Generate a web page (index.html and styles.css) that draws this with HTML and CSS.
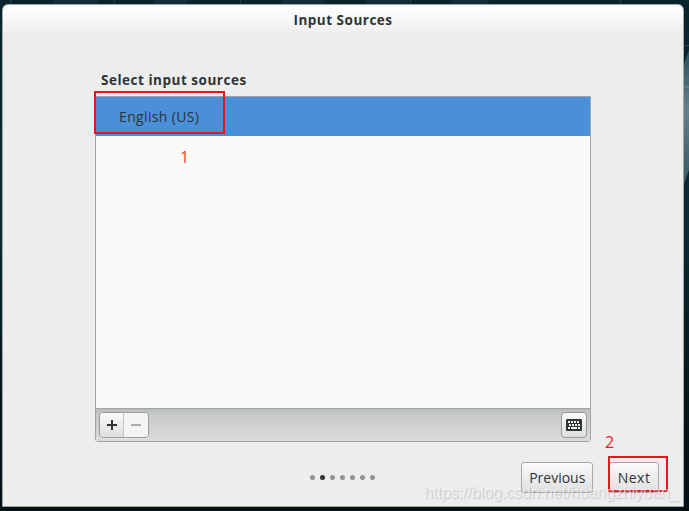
FILE: index.html
```html
<!DOCTYPE html>
<html lang="en">
<head>
<meta charset="utf-8">
<title>Input Sources</title>
<link rel="stylesheet" href="styles.css">
</head>
<body>
<svg class="wallpaper" width="689" height="511" viewBox="0 0 689 511" aria-hidden="true">
  <defs><linearGradient id="teal" x2="0" y2="1"><stop stop-color="#29505c"/><stop offset=".45" stop-color="#64828d"/><stop offset="1" stop-color="#355864"/></linearGradient></defs>
  <path fill="#142f39" d="M54 0h44l-2 4H52zM155 0h33l-2 4h-33zM283 0h43l-2 4h-43zM367 0h43l-2 4h-42zM453 0h36l-2 4h-35z"/>
  <path stroke="#28454e" fill="none" d="M11 0L10 4M115 0L113 4M241 0L240 4M411 0L410 4M621 0L620 4M684 45.500H689"/>
  <path fill="url(#teal)" d="M689 50V170L684 184V64z"/>
  <path stroke="#6c8b94" d="M684 87H689"/>
</svg>
<main class="window">
  <header class="titlebar">Input Sources</header>
  <section class="content">
    <h1 class="heading"><span>Select input sources</span></h1>
    <div class="sources">
      <div class="source"><span>English (US)</span></div>
      <div class="empty"></div>
      <div class="toolbar">
        <div class="group">
          <button class="tool" aria-label="Add"><svg width="10" height="10"><path d="M4 0h2v4h4v2H6v4H4V6H0V4h4z"/></svg></button>
          <button class="tool disabled" aria-label="Remove"><svg width="10" height="10"><path d="M0 4h10v2H0z"/></svg></button>
        </div>
        <button class="tool keyboard" aria-label="Keyboard layout"><svg width="16" height="12"><rect width="16" height="12" rx="1"/><path class="keys" d="M2 2h2v2H2zM5 2h2v2H5zM8 2h2v2H8zM11 2h2v2h-2zM3 5h2v2H3zM6 5h2v2H6zM9 5h2v2H9zM12 5h2v2h-2zM2 8h2v2H2zM5 8h6v2H5zM12 8h2v2h-2z"/></svg></button>
      </div>
    </div>
  </section>
  <footer class="footer">
    <div class="pages"><i></i><i class="current"></i><i></i><i></i><i></i><i></i><i></i></div>
    <button class="nav previous"><span>Previous</span></button>
    <button class="nav next"><span>Next</span></button>
  </footer>
</main>
<div class="mark mark-source"></div>
<div class="mark mark-next"></div>
<span class="step step-one">1</span>
<span class="step step-two">2</span>
<span class="watermark">https://blog.csdn.net/huangzhiyuan_</span>
</body>
</html>
```
FILE: styles.css
```css
* { box-sizing: border-box; }
body {
  margin: 0;
  width: 689px;
  height: 511px;
  padding: 4px 0 0 2px;
  overflow: hidden;
  position: relative;
  background: linear-gradient(#0a242c, #0a2a32 45%, #041519 80%, #021014);
  font-family: "Open Sans", "Noto Sans", sans-serif;
  font-size: 14px;
  color: #2e3436;
}
button { font: inherit; color: inherit; padding: 0; margin: 0; }
svg { display: block; }
.wallpaper { position: absolute; left: 0; top: 0; }
.window {
  position: relative;
  width: 682px;
  height: 503px;
  display: flex;
  flex-direction: column;
  border: 1px solid #a3a6a5;
  border-radius: 6px 6px 0 0;
  background: linear-gradient(#fff, #ededed 31px);
}
.titlebar {
  height: 32px;
  line-height: 31px;
  text-align: center;
  font-size: 13.5px;
  font-weight: 700;
  letter-spacing: .5px;
}
.content { padding: 32px 92px 0; }
.heading {
  margin: 0 0 0 6px;
  height: 27px;
  line-height: 22px;
  font-size: 13.5px;
  font-weight: 700;
  letter-spacing: .52px;
}
.sources {
  width: 496px;
  height: 346px;
  border: 1px solid #a1a4a0;
  border-radius: 0 0 3px 3px;
  display: flex;
  flex-direction: column;
  background: #fafbf9;
}
.source {
  height: 39px;
  padding-left: 23px;
  line-height: 40px;
  letter-spacing: .35px;
  background: #4a90d9;
}
.empty { flex: 1; }
.toolbar {
  height: 33px;
  padding: 3px 3px 0 3px;
  display: flex;
  justify-content: space-between;
  border-top: 1px solid #a1a4a0;
  background: linear-gradient(#b9bdb9, #c6c9c6 5px, #d9dcd9);
}
.group { display: flex; width: 50px; height: 26px; border: 1px solid #989d98; border-radius: 4px; overflow: hidden; box-shadow: 0 1px #e8eae8; }
.tool {
  display: flex;
  align-items: center;
  justify-content: center;
  width: 24px;
  border: 0;
  border-right: 1px solid #c1c4c1;
  background: linear-gradient(#fafafa, #dedede);
  fill: #2e3436;
}
.tool.disabled { width: 24px; border: 0; background: #f4f4f2; fill: #a8aca8; }
.tool.keyboard { width: 26px; height: 26px; border: 1px solid #989d98; border-radius: 4px; }
.keys { fill: #f2f2f2; }
.footer { display: flex; padding: 20px 24px 0 307px; align-items: flex-start; }
.pages { display: flex; gap: 5px; width: 211px; padding-top: 13px; }
.pages i { width: 5px; height: 5px; border-radius: 50%; background: #909392; }
.pages .current { background: #2e3436; }
.nav {
  height: 31px;
  border: 1px solid #a5a8a7;
  border-radius: 3px;
  background: linear-gradient(#fafafa, #e0e0e0);
  line-height: 30px;
}
.previous { width: 72px; margin-left: 1px; letter-spacing: 0; }
.next { width: 50px; margin-left: 16px; letter-spacing: .5px; }
.mark { position: absolute; border: 2px solid #ec141c; }
.mark-source { left: 94px; top: 91px; width: 131px; height: 43px; }
.mark-next { left: 608px; top: 456px; width: 60px; height: 36px; }
.step { position: absolute; font-size: 16px; line-height: 20px; color: #f01923; }
.step-one { left: 180px; top: 147px; color: #f4461f; }
.step-two { left: 605px; top: 432px; }
.watermark {
  position: absolute;
  left: 424px;
  top: 483px;
  font: 16px/20px "Liberation Sans", sans-serif;
  letter-spacing: -.05px;
  color: rgba(250, 250, 250, .6);
  text-shadow: 1px 1px 1px rgba(120, 120, 120, .35);
  white-space: nowrap;
}
```
